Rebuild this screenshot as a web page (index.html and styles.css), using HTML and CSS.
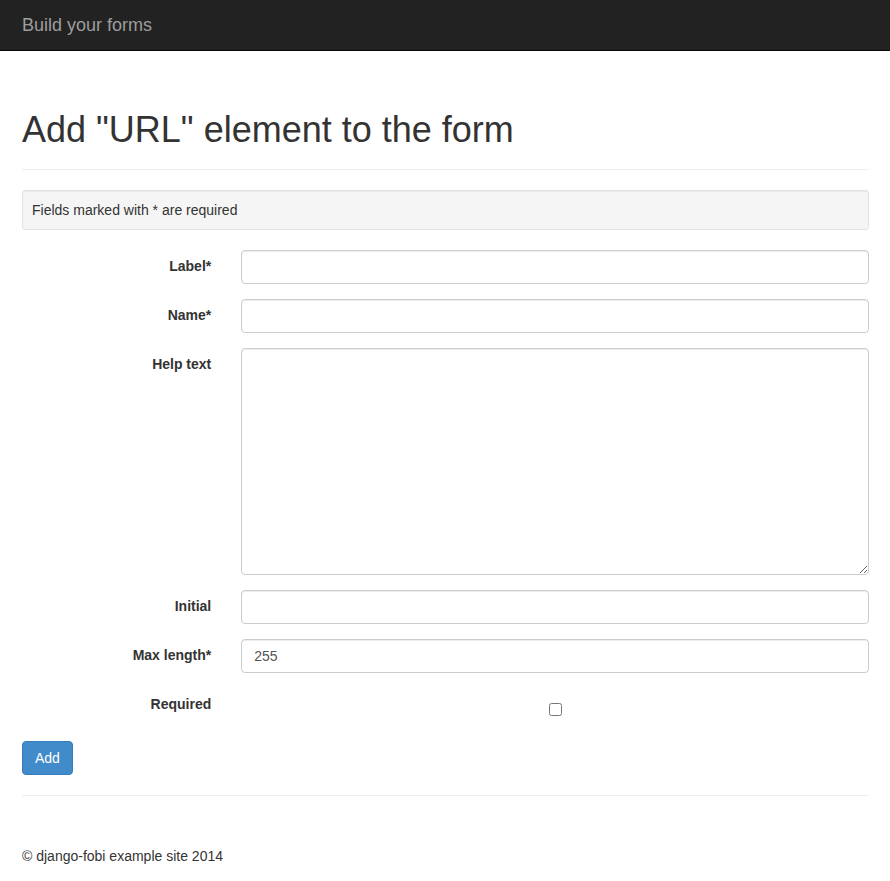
FILE: index.html
```html
<!DOCTYPE html>
<html lang="en">
<head>
  <meta charset="UTF-8">
  <title>Build your forms</title>
  <link rel="stylesheet" href="styles.css">
</head>
<body>
  <nav class="navbar">
    <a class="brand" href="#">Build your forms</a>
  </nav>

  <div class="container">
    <div class="page-header">
      <h1>Add "URL" element to the form</h1>
    </div>

    <div class="well">Fields marked with * are required</div>

    <form class="form-horizontal">
      <div class="form-group">
        <label class="control-label" for="id_label">Label*</label>
        <div class="field"><input type="text" id="id_label" class="form-control"></div>
      </div>
      <div class="form-group">
        <label class="control-label" for="id_name">Name*</label>
        <div class="field"><input type="text" id="id_name" class="form-control"></div>
      </div>
      <div class="form-group">
        <label class="control-label" for="id_help_text">Help text</label>
        <div class="field"><textarea id="id_help_text" class="form-control textarea"></textarea></div>
      </div>
      <div class="form-group">
        <label class="control-label" for="id_initial">Initial</label>
        <div class="field"><input type="text" id="id_initial" class="form-control"></div>
      </div>
      <div class="form-group">
        <label class="control-label" for="id_max_length">Max length*</label>
        <div class="field"><input type="text" id="id_max_length" class="form-control" value="255"></div>
      </div>
      <div class="form-group">
        <label class="control-label" for="id_required">Required</label>
        <div class="field check"><input type="checkbox" id="id_required"></div>
      </div>

      <button type="button" class="btn-primary">Add</button>
    </form>

    <hr>

    <footer>
      <p>&copy; django-fobi example site 2014</p>
    </footer>
  </div>
</body>
</html>
```

FILE: styles.css
```css
body {
  margin: 0;
  font-family: "Liberation Sans", Arial, sans-serif;
  font-size: 14px;
  line-height: 20px;
  color: #333;
  background: #fff;
}
.navbar {
  height: 50px;
  background: #222;
  border-bottom: 1px solid #080808;
}
.brand {
  display: block;
  padding: 15px 22px;
  font-size: 18px;
  line-height: 20px;
  color: #9d9d9d;
  text-decoration: none;
}
.container {
  padding: 0 21px 0 22px;
}
.page-header {
  margin: 59px 0 20px;
  padding-bottom: 9px;
  border-bottom: 1px solid #eee;
}
.page-header h1 {
  margin: 0 0 10px;
  font-size: 36px;
  font-weight: 500;
  line-height: 1.1;
}
.well {
  padding: 9px;
  margin-bottom: 20px;
  background: #f5f5f5;
  border: 1px solid #e3e3e3;
  border-radius: 3px;
  box-shadow: inset 0 1px 1px rgba(0,0,0,0.05);
}
.form-group {
  display: grid;
  grid-template-columns: 25% 75%;
  margin: 0 -15px 15px;
}
.control-label {
  padding: 6px 15px 0;
  text-align: right;
  font-weight: bold;
}
.field {
  padding: 0 15px;
}
.form-control {
  display: block;
  width: 100%;
  height: 34px;
  box-sizing: border-box;
  padding: 6px 12px;
  font-family: inherit;
  font-size: 14px;
  line-height: 20px;
  color: #555;
  background: #fff;
  border: 1px solid #ccc;
  border-radius: 4px;
  box-shadow: inset 0 1px 1px rgba(0,0,0,0.075);
}
.textarea {
  height: 227px;
  resize: vertical;
}
.check {
  height: 38px;
  padding-top: 15px;
  box-sizing: border-box;
}
.check input {
  display: block;
  margin: 0 auto;
  width: 13px;
  height: 13px;
}
.btn-primary {
  padding: 6px 12px;
  font-family: inherit;
  font-size: 14px;
  line-height: 20px;
  color: #fff;
  background: #428bca;
  border: 1px solid #357ebd;
  border-radius: 4px;
  cursor: pointer;
}
hr {
  margin: 20px 0;
  border: 0;
  border-top: 1px solid #eee;
}
footer {
  padding-top: 30px;
}
footer p {
  margin: 0 0 10px;
}
```
